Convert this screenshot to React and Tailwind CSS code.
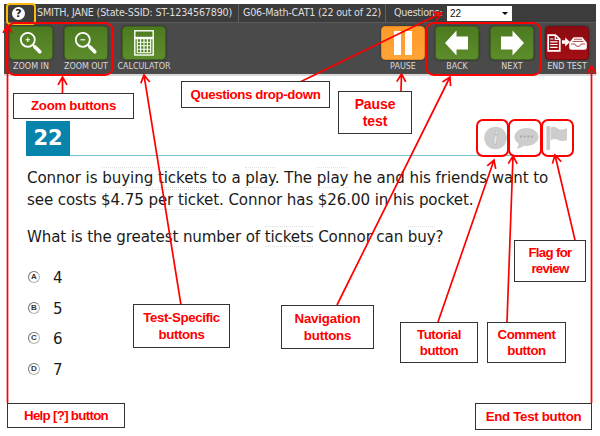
import React from "react";

const tones = {
  green: "bg-gradient-to-b from-[#4d7a20] via-[#558326] to-[#5d8c2c] border-[#3d6418]",
  orange: "bg-gradient-to-b from-[#ff9a2a] to-[#ffa436] border-[#e98a20]",
  red: "bg-gradient-to-b from-[#8c0b10] to-[#a30f15] border-[#7a080c]",
};

function Tool({ tone, label, className = "", spacing = "", children }) {
  return (
    <div className={`flex w-[44px] shrink-0 flex-col items-center ${className}`}>
      <div className={`flex h-[34px] w-[44px] items-center justify-center rounded-[4px] border shadow-[0_0_2px_#222] ${tones[tone]}`}>
        {children}
      </div>
      <span className={`mt-[1px] whitespace-nowrap text-[8px] leading-[11px] text-[#d8d8d8] ${spacing}`}>{label}</span>
    </div>
  );
}

function Magnifier({ plus }) {
  return (
    <svg width="24" height="24" viewBox="0 0 24 24" fill="none" stroke="#fff">
      <circle cx="8.8" cy="8.8" r="7" strokeWidth="1.8" />
      <path d="M13.8 13.8l2.3 2.3" strokeWidth="2" />
      <path d="M16 16l4.8 4.8" strokeWidth="3.6" strokeLinecap="round" />
      <path d={plus ? "M6.6 8.8h4.4M8.8 6.6v4.4" : "M6.4 8.8h4.8"} strokeWidth="1.1" />
    </svg>
  );
}

function Calculator() {
  return (
    <svg width="20" height="26" viewBox="0 0 20 26" fill="none" stroke="#fff">
      <rect x="0.8" y="0.8" width="18.4" height="24.2" strokeWidth="1.4" />
      <path d="M1 8h18" strokeWidth="2.4" />
      <path d="M3.3 9v14M6.6 9v14M10 9v14M13.4 9v14M16.7 9v14M3 12.3h14M3 15.8h14M3 19.2h14M3 22.7h14" strokeWidth="1.1" />
    </svg>
  );
}

function Arrow({ right }) {
  return (
    <svg width="24" height="26" viewBox="0 0 24 26" fill="#fff">
      <path d={right ? "M24 13L12.5 0.5V6.5H1V19.5H12.5V25.5Z" : "M0 13L11.5 0.5V6.5H23V19.5H11.5V25.5Z"} />
    </svg>
  );
}

function EndIcon() {
  return (
    <svg className="shrink-0" width="40" height="18" viewBox="0 0 40 18" fill="none" stroke="#fff">
      <path d="M1.2 1.2h7.3l4.3 4v11.6H1.2z" strokeWidth="1.7" />
      <path d="M8.3 1.2v4.2h4.4M3.2 5h3.2M3.2 7.8h7.4M3.2 10.5h7.4M3.2 13.3h7.4" strokeWidth="1.2" />
      <path d="M15 6.2h3.2V3.6l4.8 4.4-4.8 4.4V9.8H15z" fill="#fff" stroke="none" />
      <path d="M26.6 3.2h8.8l4.4 5.6v4.7q0 2.3-2.3 2.3H24.5q-2.3 0-2.3-2.3V8.8z" fill="#fff" stroke="none" />
      <path d="M27 5.2h8M25.5 7.4h11M24 10h3.8q.7 2.5 3.2 2.5t3.2-2.5h3.8" stroke="#9d1a1e" strokeWidth=".8" />
    </svg>
  );
}

function Term({ children }) {
  return <span className="border-y border-dotted border-[#dedede] pt-px">{children}</span>;
}

function Choice({ letter, value }) {
  return (
    <div className="flex h-[30.6px] items-center">
      <span className="flex h-[12px] w-[12px] items-center justify-center rounded-full border border-[#b5b5b5] border-l-[#777] border-t-[#777] font-['Liberation_Sans',sans-serif] text-[8px] font-bold leading-none text-[#333]">
        {letter}
      </span>
      <span className="ml-[13px] mt-[2px] text-[15px] leading-[20px]">{value}</span>
    </div>
  );
}

function Callout({ place, lines, size = "text-[13.3px]", spacing = "tracking-[-0.3px]", lead = "leading-[16px]" }) {
  return (
    <div className={`absolute flex flex-col items-center justify-center border border-[#333] bg-white font-['Liberation_Sans',sans-serif] font-bold text-[#ff0000] ${place} ${size} ${lead} ${spacing}`}>
      {lines.map((line) => (
        <span key={line} className="whitespace-nowrap">{line}</span>
      ))}
    </div>
  );
}

const pointers = [
  [62.5, 93, 62.5, 77],
  [181, 305, 144, 75],
  [300, 82, 441.5, 13],
  [401, 91, 401.5, 74],
  [337, 305, 450, 77],
  [438, 322, 494, 160],
  [507, 322, 513, 156],
  [575, 240, 555, 155],
  [591.5, 403, 591.5, 66],
  [7.5, 403, 7.5, 25],
];

function pointerPath([x1, y1, x2, y2]) {
  const a = Math.atan2(y2 - y1, x2 - x1);
  const wing = (d) => `${x2 - 9 * Math.cos(a + d)} ${y2 - 9 * Math.sin(a + d)}`;
  return `M${x1} ${y1}L${x2} ${y2}M${wing(0.52)}L${x2} ${y2}L${wing(-0.52)}`;
}

export default function App() {
  return (
    <div className="relative h-[436px] w-[600px] overflow-hidden bg-white px-[4px] pt-[4px] font-['DejaVu_Sans',sans-serif] text-[#1a1a1a]">
      <header className="h-[72px] w-[592px] border-b-2 border-[#d9d9d9] bg-[#4a4a4a]">
        <div className="flex h-[19px] items-center border-b border-[#5a5a5a] bg-[#3c3c3c] text-[9.6px] text-[#dedede]">
          <span className="ml-[8px] flex h-[13px] w-[13px] items-center justify-center rounded-full bg-white text-[11px] font-bold leading-none text-[#222]">?</span>
          <span className="ml-[12px] w-[201px] shrink-0 whitespace-nowrap pt-px tracking-[-0.19px]">SMITH, JANE (State-SSID: ST-1234567890)</span>
          <span className="flex h-full w-[148px] shrink-0 items-center whitespace-nowrap border-x border-[#606060] pl-[4px] pt-px tracking-[-0.22px]">G06-Math-CAT1 (22 out of 22)</span>
          <span className="ml-[8px] w-[53px] shrink-0 pt-px tracking-[-0.3px]">Questions:</span>
          <span className="flex h-[15px] w-[65px] shrink-0 items-center justify-between bg-white pl-[3px] pr-[4px] font-['Liberation_Sans',sans-serif] text-[10px] text-[#111]">
            22
            <i className="border-x-[3px] border-t-[3px] border-x-transparent border-t-black" />
          </span>
        </div>
        <div className="flex pl-[5px] pt-[3px]">
          <Tool tone="green" label="ZOOM IN"><Magnifier plus /></Tool>
          <Tool tone="green" label="ZOOM OUT" className="ml-[11px]" spacing="tracking-[-0.1px]"><Magnifier /></Tool>
          <Tool tone="green" label="CALCULATOR" className="ml-[14px]"><Calculator /></Tool>
          <Tool tone="orange" label="PAUSE" className="ml-[215px]">
            <span className="flex gap-[4px]"><i className="h-[24px] w-[7px] bg-white" /><i className="h-[24px] w-[7px] bg-white" /></span>
          </Tool>
          <Tool tone="green" label="BACK" className="ml-[10px]"><Arrow /></Tool>
          <Tool tone="green" label="NEXT" className="ml-[11px]"><Arrow right /></Tool>
          <Tool tone="red" label="END TEST" className="ml-[11px]"><EndIcon /></Tool>
        </div>
      </header>

      <main className="pl-[22px]">
        <div className="mt-[45px] flex h-[35px] w-[514px] items-start border-b border-[#78c4d2]">
          <span className="flex h-[35px] w-[44px] shrink-0 items-center justify-center bg-[#0883ab] text-[21px] font-bold text-white">22</span>
          <span className="ml-[414px] flex shrink-0 items-center gap-[7px]">
            <svg width="23" height="34" viewBox="0 0 23 34">
              <circle cx="11.5" cy="17" r="11.3" fill="#cdcdcd" />
              <text x="11.5" y="23" textAnchor="middle" fontSize="18" fontStyle="italic" fontWeight="bold" fontFamily="Liberation Serif, serif" fill="#ececec" stroke="#aaa" strokeWidth=".4">i</text>
            </svg>
            <svg width="25" height="34" viewBox="0 0 25 34">
              <path d="M12.5 7C5.5 7 .5 11 .5 16c0 2.8 1.6 5 4 6.5 0 2.5-.8 4-2 5.2 3-.2 5.6-1.4 7.3-2.9 8.2.8 14.7-3.2 14.7-8.8C24.5 11 19.5 7 12.5 7z" fill="#cdcdcd" />
              <path d="M6 15.5h13" stroke="#a9a9a9" strokeWidth="2" strokeDasharray="2 1.6" />
            </svg>
            <svg width="22" height="34" viewBox="0 0 22 34">
              <path d="M.8 5.5h2.9v23H.8z" fill="#c9c9c9" stroke="#b9b9b9" strokeWidth=".5" />
              <path d="M4.5 6.5c4-1.8 6.5.1 8 1.5 2.5 1.2 5 .2 8.5-.8v12c-4.5 1.4-7.5.7-9.5-.4-2-1.3-4.5-1.3-7 .8z" fill="#cdcdcd" />
            </svg>
          </span>
        </div>

        <div className="ml-[1px] mt-[11px] whitespace-nowrap text-[15.1px] leading-[22px]">
          <p className="tracking-[-0.08px]">Connor is <Term>buying</Term> <Term>tickets</Term> to a <Term>play</Term>. The <Term>play</Term> he and his friends want to</p>
          <p className="tracking-[-0.11px]">see costs $4.75 <Term>per ticket</Term>. Connor has $26.00 in his pocket.</p>
          <p className="mt-[15px] tracking-[-0.13px]">What is the greatest number of <Term>tickets</Term> Connor can <Term>buy</Term>?</p>
        </div>

        <div className="ml-[2px] mt-[14px]">
          <Choice letter="A" value="4" />
          <Choice letter="B" value="5" />
          <Choice letter="C" value="6" />
          <Choice letter="D" value="7" />
        </div>
      </main>

      <div className="absolute left-[6px] top-[3px] h-[22px] w-[30px] rounded-[4px] border-2 border-[#fdb913]" />
      <div className="absolute left-[6px] top-[22px] h-[54px] w-[108px] rounded-[9px] border-2 border-[#ff0000]" />
      <div className="absolute left-[425px] top-[22px] h-[54px] w-[117px] rounded-[9px] border-2 border-[#ff0000]" />
      <div className="absolute left-[476px] top-[119px] h-[38px] w-[33px] rounded-[7px] border-2 border-[#ff0000]" />
      <div className="absolute left-[508px] top-[119px] h-[38px] w-[34px] rounded-[7px] border-2 border-[#ff0000]" />
      <div className="absolute left-[541px] top-[119px] h-[38px] w-[33px] rounded-[7px] border-2 border-[#ff0000]" />

      <svg className="absolute inset-0" width="600" height="436" fill="none" stroke="#ff0000" strokeWidth="1.7">
        {pointers.map((p) => <path key={p.join()} d={pointerPath(p)} />)}
      </svg>

      <Callout place="left-[13px] top-[93px] w-[121px] h-[26px]" lines={["Zoom buttons"]} />
      <Callout place="left-[181px] top-[81px] w-[149px] h-[27px]" lines={["Questions drop-down"]} spacing="tracking-[-0.4px]" />
      <Callout place="left-[338px] top-[91px] w-[74px] h-[43px]" lines={["Pause", "test"]} lead="leading-[17px]" size="text-[14px]" spacing="tracking-[-0.1px]" />
      <Callout place="left-[133px] top-[304px] w-[97px] h-[44px]" lines={["Test-Specific", "buttons"]} lead="leading-[17px]" spacing="tracking-[-0.4px]" />
      <Callout place="left-[281px] top-[305px] w-[93px] h-[44px]" lines={["Navigation", "buttons"]} lead="leading-[17px]" spacing="tracking-[-0.2px]" />
      <Callout place="left-[400px] top-[322px] w-[78px] h-[41px]" lines={["Tutorial", "button"]} spacing="tracking-[-0.5px]" />
      <Callout place="left-[487px] top-[322px] w-[79px] h-[41px]" lines={["Comment", "button"]} spacing="tracking-[-0.5px]" />
      <Callout place="left-[514px] top-[240px] w-[72px] h-[42px]" lines={["Flag for", "review"]} spacing="tracking-[-0.7px]" />
      <Callout place="left-[7px] top-[403px] w-[118px] h-[25px]" lines={["Help [?] button"]} spacing="tracking-[-0.7px]" />
      <Callout place="left-[475px] top-[403px] w-[117px] h-[27px]" lines={["End Test button"]} />
    </div>
  );
}
